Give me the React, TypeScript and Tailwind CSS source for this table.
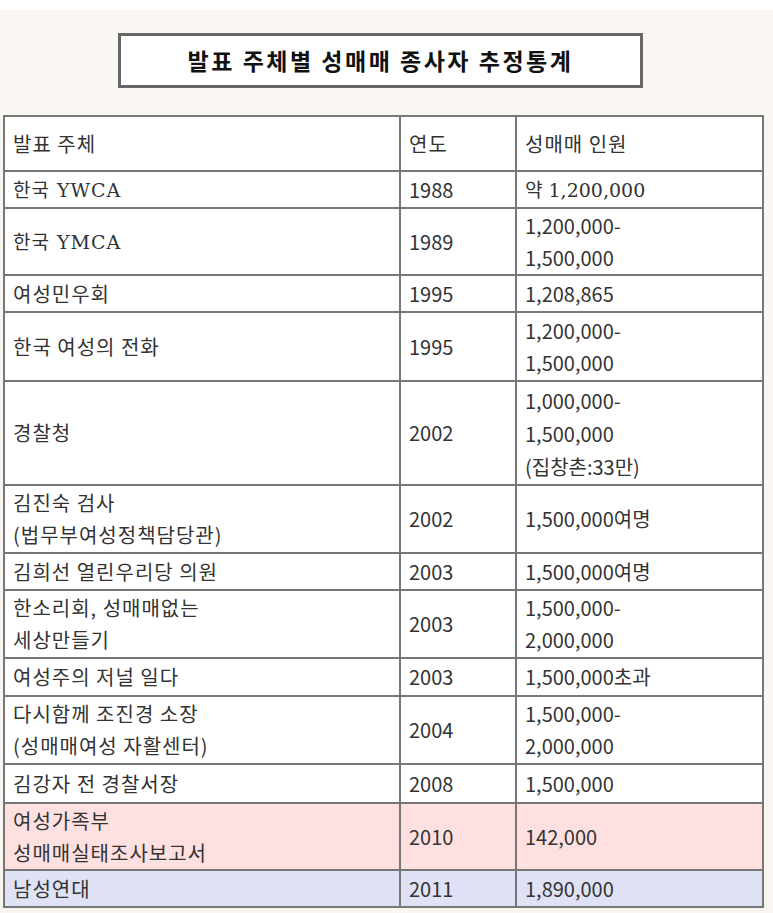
import React from 'react';

type Row = {
  name: string[];
  year: string;
  count: string[];
  h: string;
  bg?: string;
  serif?: boolean;
};

const rows: Row[] = [
  { name: ['한국 YWCA'], year: '1988', count: ['약 1,200,000'], h: 'h-[37px]', serif: true },
  { name: ['한국 YMCA'], year: '1989', count: ['1,200,000-', '1,500,000'], h: 'h-[67px]', serif: true },
  { name: ['여성민우회'], year: '1995', count: ['1,208,865'], h: 'h-[37px]' },
  { name: ['한국 여성의 전화'], year: '1995', count: ['1,200,000-', '1,500,000'], h: 'h-[69px]' },
  { name: ['경찰청'], year: '2002', count: ['1,000,000-', '1,500,000', '(집창촌:33만)'], h: 'h-[104px]' },
  { name: ['김진숙 검사', '(법무부여성정책담당관)'], year: '2002', count: ['1,500,000여명'], h: 'h-[68px]' },
  { name: ['김희선 열린우리당 의원'], year: '2003', count: ['1,500,000여명'], h: 'h-[37px]' },
  { name: ['한소리회, 성매매없는', '세상만들기'], year: '2003', count: ['1,500,000-', '2,000,000'], h: 'h-[68px]' },
  { name: ['여성주의 저널 일다'], year: '2003', count: ['1,500,000초과'], h: 'h-[38px]' },
  { name: ['다시함께 조진경 소장', '(성매매여성 자활센터)'], year: '2004', count: ['1,500,000-', '2,000,000'], h: 'h-[68px]' },
  { name: ['김강자 전 경찰서장'], year: '2008', count: ['1,500,000'], h: 'h-[39px]' },
  { name: ['여성가족부', '성매매실태조사보고서'], year: '2010', count: ['142,000'], h: 'h-[67px]', bg: 'bg-[#fde0df]' },
  { name: ['남성연대'], year: '2011', count: ['1,890,000'], h: 'h-[37px]', bg: 'bg-[#dfe1f4]' },
];

const cell = 'border-2 border-[#777] px-[8px] py-0 align-middle leading-[32px]';
const serifText = "font-['DejaVu_Serif','Noto_Sans_CJK_KR',serif] text-[19px]";

const App: React.FC = () => {
  return (
    <div className="min-h-[913px] bg-white pt-[10px] font-['Noto_Sans_CJK_KR',sans-serif] text-[#333]">
      <div className="min-h-[903px] bg-[#f9f6f2] pt-[23px]">
        {/* Title */}
        <div className="ml-[118px] flex h-[55px] w-[525px] items-center justify-center border-[3px] border-[#666] bg-white">
          <h1 className="text-[23px] font-bold tracking-[2.5px] text-[#111]">발표 주체별 성매매 종사자 추정통계</h1>
        </div>

        {/* Table */}
        <table className="ml-[3px] mt-[27px] w-[759px] table-fixed border-collapse bg-white text-[20px] tracking-[1px]">
          <colgroup>
            <col className="w-[396px]" />
            <col className="w-[116px]" />
            <col className="w-[247px]" />
          </colgroup>
          <tbody>
            <tr className="h-[55px]">
              <td className={cell}>발표 주체</td>
              <td className={cell}>연도</td>
              <td className={cell}>성매매 인원</td>
            </tr>
            {rows.map((r, i) => (
              <tr key={i} className={`${r.h} ${r.bg ?? ''}`}>
                <td className={cell}>
                  {r.name.map((line, j) => (
                    <div key={j} className={r.serif ? serifText : ''}>
                      {line}
                    </div>
                  ))}
                </td>
                <td className={`${cell} tracking-[0px]`}>{r.year}</td>
                <td className={`${cell} tracking-[0px]`}>
                  {r.count.map((line, j) => (
                    <div key={j} className={`${i === 0 ? serifText : ''} ${r.count.length === 3 ? 'leading-[33px]' : ''}`}>
                      {line}
                    </div>
                  ))}
                </td>
              </tr>
            ))}
          </tbody>
        </table>
      </div>
    </div>
  );
};

export default App;
